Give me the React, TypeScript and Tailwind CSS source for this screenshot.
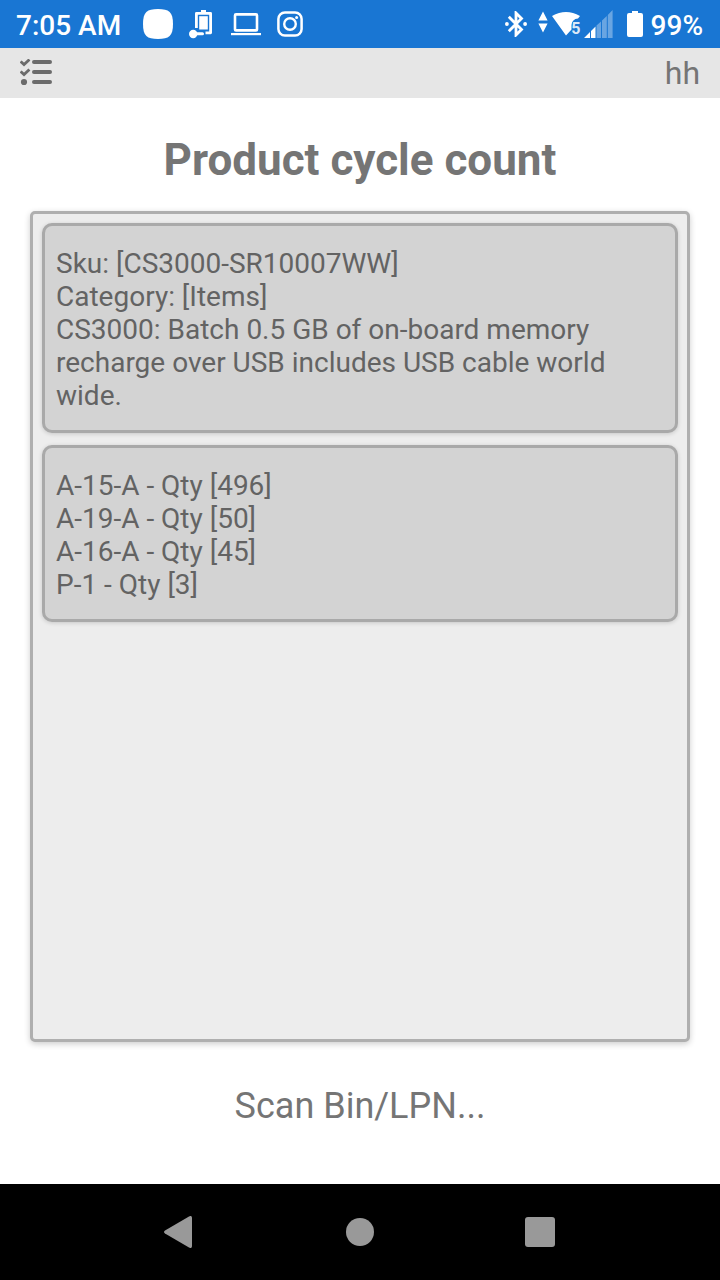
import React from "react";

const productLines = [
  "Sku: [CS3000-SR10007WW]",
  "Category: [Items]",
  "CS3000: Batch 0.5 GB of on-board memory recharge over USB includes USB cable world wide.",
];

const bins = [
  { name: "A-15-A", qty: 496 },
  { name: "A-19-A", qty: 50 },
  { name: "A-16-A", qty: 45 },
  { name: "P-1", qty: 3 },
];

function StatusBar() {
  return (
    <div className="flex h-12 shrink-0 items-center justify-between bg-[#1976d3] pl-4 pr-[17px] text-white">
      <div className="flex items-center">
        <time className="mt-1 w-[127px] text-[28px] leading-8 font-medium">7:05 AM</time>
        <svg className="h-[30px] w-[30px]" viewBox="0 0 30 30" fill="currentColor" aria-hidden="true">
          <path d="M15 0C26 0 30 3 30 15S26 30 15 30 0 27 0 15 4 0 15 0Z" />
        </svg>
        <svg className="ml-4 h-[30px] w-6" viewBox="0 0 24 30" fill="none" stroke="currentColor" aria-hidden="true">
          <path d="M7.4 19V4.4H21.6V23.8H16.5" strokeWidth="2.8" strokeLinejoin="round" />
          <path d="M12 1H17V4H12Z" fill="currentColor" stroke="none" />
          <path d="M10.2 7.2H18.8V20.5H10.2Z" fill="currentColor" stroke="none" />
          <circle cx="4.2" cy="25" r="4.2" fill="currentColor" stroke="none" />
          <path d="M6 24.8H13.5" strokeWidth="3" strokeLinecap="round" />
        </svg>
        <svg className="ml-[18px] h-[30px] w-[30px]" viewBox="0 0 30 30" fill="none" stroke="currentColor" aria-hidden="true">
          <rect x="4" y="5.4" width="22" height="16" rx="1" strokeWidth="2.6" />
          <path d="M0 24H30V26.2H0Z" fill="currentColor" stroke="none" />
        </svg>
        <svg className="ml-4 h-[26px] w-[26px]" viewBox="0 0 26 26" fill="none" stroke="currentColor" aria-hidden="true">
          <rect x="1.4" y="1.4" width="23.2" height="23.2" rx="6.5" strokeWidth="2.5" />
          <circle cx="13" cy="13" r="5.8" strokeWidth="2.4" />
          <circle cx="19.6" cy="6.4" r="1.5" fill="currentColor" stroke="none" />
        </svg>
      </div>
      <div className="flex items-center">
        <svg className="h-[26px] w-[22px]" viewBox="0 0 22 26" fill="none" stroke="currentColor" aria-hidden="true">
          <path d="M3.8 5.8L16.5 18.5L11 24V2L16.5 7.5L3.8 20.2" strokeWidth="2.8" />
          <circle cx="1.9" cy="13" r="1.9" fill="currentColor" stroke="none" />
          <circle cx="20.1" cy="13" r="1.9" fill="currentColor" stroke="none" />
        </svg>
        <svg className="ml-[11px] h-[26px] w-[10px]" viewBox="0 0 10 26" fill="currentColor" aria-hidden="true">
          <path d="M5 0.5L9.6 9.5H0.4ZM5 21.5L9.6 12.5H0.4Z" />
        </svg>
        <div className="relative ml-1 h-[26px] w-[29px]">
          <svg className="h-[26px] w-[29px]" viewBox="0 0 29 26" fill="currentColor" aria-hidden="true">
            <path d="M0 5Q14 -3 28 5L26 7.5Q20 8 19.5 14V18.5L14 24.5Z" />
          </svg>
          <span className="absolute right-0 bottom-0 text-[16px] leading-4 font-bold text-[#dbe9f8]">5</span>
        </div>
        <svg className="ml-[3px] h-7 w-[29px]" viewBox="0 0 29 28" fill="currentColor" aria-hidden="true">
          <path d="M0 28L6 22V28ZM7 21L11.5 16.5V28H7Z" />
          <path d="M12.5 15.5L17 11.5V28H12.5ZM18 10.5L22.8 6V28H18ZM23.8 5L28.6 0V28H23.8Z" opacity="0.35" />
        </svg>
        <svg className="ml-[14px] h-[26px] w-4" viewBox="0 0 16 26" fill="currentColor" aria-hidden="true">
          <path d="M5 0H11V2H14Q16 2 16 4V24Q16 26 14 26H2Q0 26 0 24V4Q0 2 2 2H5Z" />
        </svg>
        <span className="mt-1 ml-2 text-[28px] leading-8 font-medium">99%</span>
      </div>
    </div>
  );
}

function Toolbar() {
  return (
    <header className="flex h-[50px] shrink-0 items-center justify-between bg-[#e6e6e6] px-5">
      <button type="button" aria-label="Tasks" className="block text-[#6b6b6b]">
        <svg className="h-7 w-8" viewBox="0 0 32 28" fill="none" stroke="currentColor" aria-hidden="true">
          <path d="M14 3H30M14 13H30M14 23H30" strokeWidth="4" strokeLinecap="round" />
          <path d="M1.6 3.4L4 5.6L8.4 1.4M1.6 13.4L4 15.6L8.4 11.4" strokeWidth="2.8" strokeLinecap="square" />
          <circle cx="4" cy="23" r="3.1" fill="currentColor" stroke="none" />
        </svg>
      </button>
      <span className="text-[32px] leading-[50px] text-[#757575]">hh</span>
    </header>
  );
}

function Card({ children }: { children: React.ReactNode }) {
  return (
    <section className="rounded-[10px] border-3 border-[#a9a9a9] bg-[#d3d3d3] px-[11px] pt-[21px] pb-[18px] text-[28px] leading-[33px] text-[#636363] shadow-[0_1px_4px_rgba(0,0,0,0.16)]">
      {children}
    </section>
  );
}

function NavigationBar() {
  return (
    <nav className="flex h-24 shrink-0 items-center justify-center gap-[132px] bg-black text-[#999999]">
      <button type="button" aria-label="Back" className="flex size-12 items-center justify-start pl-2">
        <svg className="h-8 w-7" viewBox="0 0 28 32" fill="currentColor" aria-hidden="true">
          <path d="M25 0.4Q28 -1 28 2V30Q28 33 25 31.6L1 17.5Q-1 16 1 14.5Z" />
        </svg>
      </button>
      <button type="button" aria-label="Home" className="flex size-12 items-center justify-center">
        <span className="size-7 rounded-full bg-current" />
      </button>
      <button type="button" aria-label="Recent apps" className="flex size-12 items-center justify-center">
        <span className="size-[30px] rounded-[3px] bg-current" />
      </button>
    </nav>
  );
}

export default function App() {
  return (
    <div className="flex min-h-screen flex-col bg-white font-[Roboto,sans-serif] text-[#616161]">
      <StatusBar />
      <Toolbar />
      <main className="flex flex-1 flex-col px-[30px]">
        <h1 className="pt-9 pb-[25px] text-center text-[44px] leading-[52px] font-bold text-[#757575]">
          Product cycle count
        </h1>
        <div className="flex flex-1 flex-col gap-3 rounded-[5px] border-3 border-[#afafaf] bg-[#ededed] p-[9px] shadow-[0_2px_6px_rgba(0,0,0,0.2)]">
          <Card>
            {productLines.map((line) => (
              <p key={line}>{line}</p>
            ))}
          </Card>
          <Card>
            <ul>
              {bins.map((bin) => (
                <li key={bin.name}>{`${bin.name} - Qty [${bin.qty}]`}</li>
              ))}
            </ul>
          </Card>
        </div>
        <p className="pt-[43px] pb-[57px] text-center text-[36px] leading-[42px] text-[#757575]">Scan Bin/LPN...</p>
      </main>
      <NavigationBar />
    </div>
  );
}
